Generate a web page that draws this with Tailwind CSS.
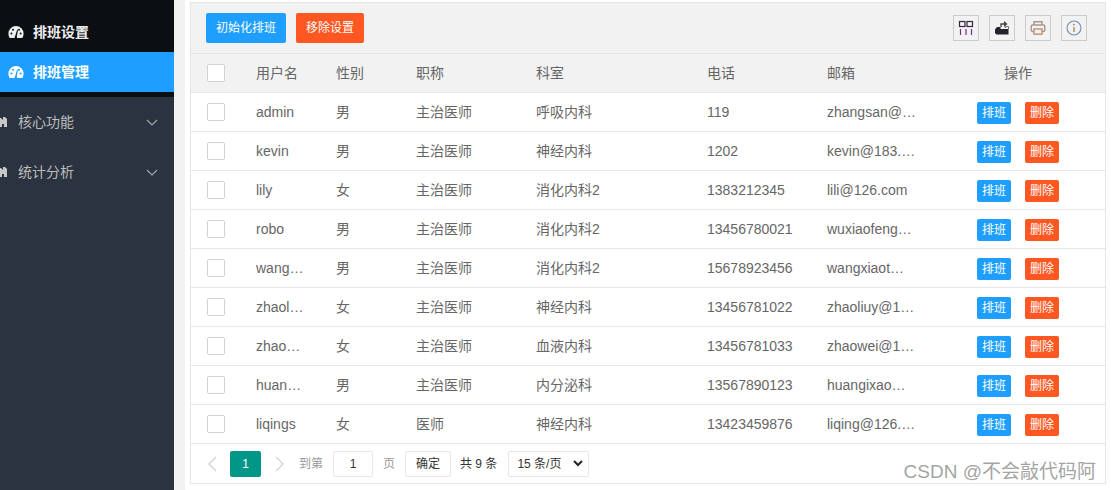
<!DOCTYPE html>
<html lang="zh">
<head>
  <meta charset="UTF-8">
  <title>排班管理</title>
  <script src="https://cdn.jsdelivr.net/npm/@tailwindcss/browser@4"></script>
</head>
<body class="bg-white font-['Liberation_Sans','Noto_Sans_CJK_SC',sans-serif] text-[14px] text-[#666] overflow-hidden">
<div class="flex h-[490px] w-[1111px] overflow-hidden">

  <!-- sidebar -->
  <aside class="w-[174px] shrink-0 bg-[#2a333f] text-[14px]">
    <div class="h-[52px] bg-[#0b0e13] pt-3 flex items-center pl-2 text-[#eee] font-bold">
      <svg class="w-[16px] h-[14px] mr-[9px]" viewBox="0 0 16 14"><path fill="#eee" d="M8 1a7.6 7.6 0 0 0-7.6 7.6c0 1.6.4 3 1.2 4.4h12.8c.8-1.4 1.2-2.8 1.2-4.4A7.6 7.6 0 0 0 8 1z"/><g fill="#0b0e13"><circle cx="3.4" cy="8.6" r="1"/><circle cx="5" cy="4.8" r="1"/><circle cx="12.6" cy="8.6" r="1"/><circle cx="11" cy="4.8" r="1"/><path d="M7 11.4 9.2 4.6l.8.3L8.8 11.6A1.2 1.2 0 1 1 7 11.4z"/></g></svg>
      排班设置
    </div>
    <div class="h-[40px] bg-[#1e9fff] flex items-center pl-2 text-white font-bold">
      <svg class="w-[16px] h-[14px] mr-[9px]" viewBox="0 0 16 14"><path fill="#fff" d="M8 1a7.6 7.6 0 0 0-7.6 7.6c0 1.6.4 3 1.2 4.4h12.8c.8-1.4 1.2-2.8 1.2-4.4A7.6 7.6 0 0 0 8 1z"/><g fill="#1e9fff"><circle cx="3.4" cy="8.6" r="1"/><circle cx="5" cy="4.8" r="1"/><circle cx="12.6" cy="8.6" r="1"/><circle cx="11" cy="4.8" r="1"/><path d="M7 11.4 9.2 4.6l.8.3L8.8 11.6A1.2 1.2 0 1 1 7 11.4z"/></g></svg>
      排班管理
    </div>
    <div class="h-[5px] bg-[#0b0e13]"></div>
    <div class="h-[50px] flex items-center justify-between pr-[16px] text-[#bdbdbd]">
      <span class="flex items-center">
        <svg class="w-[7px] h-[12px] mr-[11px]" viewBox="0 0 7 12"><path fill="#c8c8c8" d="M0 2h1l2 2V1h2l2 2v8H4V8H2v3H0z"/></svg>
        核心功能
      </span>
      <svg class="w-[12px] h-[7px]" viewBox="0 0 12 7"><path fill="none" stroke="#a8a8a8" stroke-width="1.1" d="M1 1l5 5 5-5"/></svg>
    </div>
    <div class="h-[50px] flex items-center justify-between pr-[16px] text-[#bdbdbd]">
      <span class="flex items-center">
        <svg class="w-[7px] h-[12px] mr-[11px]" viewBox="0 0 7 12"><path fill="#c8c8c8" d="M0 2h1l2 2V1h2l2 2v8H4V8H2v3H0z"/></svg>
        统计分析
      </span>
      <svg class="w-[12px] h-[7px]" viewBox="0 0 12 7"><path fill="none" stroke="#a8a8a8" stroke-width="1.1" d="M1 1l5 5 5-5"/></svg>
    </div>
  </aside>

  <div class="w-[11px] shrink-0 bg-[#f2f2f2]"></div>

  <!-- main -->
  <main class="ml-[5px] mt-[2px] w-[916px] h-[482px] border border-[#e6e6e6] bg-white relative">
    <!-- toolbar -->
    <div class="h-[51px] bg-[#f2f2f2] border-b border-[#e6e6e6] flex items-center justify-between pl-[15px] pr-[18px]">
      <div class="flex gap-[10px] text-[12px] text-white">
        <button class="h-[30px] w-[80px] bg-[#1e9fff] rounded-[2px]">初始化排班</button>
        <button class="h-[30px] w-[68px] bg-[#ff5722] rounded-[2px]">移除设置</button>
      </div>
      <div class="flex gap-[10px]">
        <div class="w-[26px] h-[26px] border border-[#ccc] flex items-center justify-center">
          <svg class="w-[16px] h-[16px]" viewBox="0 0 16 16" fill="none" stroke="#33263d" stroke-width="1.2"><rect x="1.5" y="1.5" width="5.5" height="5"/><rect x="9" y="1.5" width="5.5" height="5"/><path d="M2.5 9v6M8 9v6M13.5 9v6" stroke="#7a2a8a"/></svg>
        </div>
        <div class="w-[26px] h-[26px] border border-[#ccc] flex items-center justify-center">
          <svg class="w-[16px] h-[16px]" viewBox="0 0 16 16"><path fill="#23232b" d="M1 9.5 3 7h3.5v2h8v5.5H2.5L1 13z"/><path fill="none" stroke="#444" stroke-width="1.3" d="M7 7V4h3.5"/><path fill="#444" d="M10 1l3.5 3L10 7z"/><path fill="none" stroke="#6a6a80" stroke-width="1" d="M11.5 8V6.5h3V9"/></svg>
        </div>
        <div class="w-[26px] h-[26px] border border-[#ccc] flex items-center justify-center">
          <svg class="w-[16px] h-[16px]" viewBox="0 0 16 16" fill="none" stroke="#a8968a" stroke-width="1.4"><path d="M4 5V1.8h8V5"/><rect x="1.2" y="5" width="13.6" height="6.5" rx="1.5"/><rect x="4" y="9" width="8" height="5.2" fill="#f2f2f2" stroke="#c09070"/></svg>
        </div>
        <div class="w-[26px] h-[26px] border border-[#ccc] flex items-center justify-center">
          <svg class="w-[16px] h-[16px]" viewBox="0 0 16 16" fill="none"><circle cx="8" cy="8" r="7" stroke="#6f8bb0" stroke-width="1.1"/><path d="M8 7v5" stroke="#a08060" stroke-width="1.3"/><circle cx="8" cy="4.6" r=".9" fill="#a08060"/></svg>
        </div>
      </div>
    </div>

    <!-- header -->
    <div class="h-[39px] bg-[#f2f2f2] border-b border-[#e6e6e6] grid grid-cols-[55px_80px_80px_120px_171px_120px_120px_168px] items-center">
      <div class="pl-[16px]"><div class="w-[18px] h-[18px] border border-[#d2d2d2] bg-white rounded-[2px]"></div></div>
      <div class="px-[10px]">用户名</div>
      <div class="px-[10px]">性别</div>
      <div class="px-[10px]">职称</div>
      <div class="px-[10px]">科室</div>
      <div class="px-[10px]">电话</div>
      <div class="px-[10px]">邮箱</div>
      <div class="text-center pr-[6px]">操作</div>
    </div>

    <div id="rows"></div>

    <!-- pager -->
    <div class="h-[39px] flex items-center text-[12px] text-[#999] pl-[16px]">
      <svg class="w-[10px] h-[16px]" viewBox="0 0 10 16"><path fill="none" stroke="#d2d2d2" stroke-width="1.3" d="M9 1 2 8l7 7"/></svg>
      <span class="ml-[13px] w-[31px] h-[26px] bg-[#009688] rounded-[2px] text-white flex items-center justify-center">1</span>
      <svg class="ml-[14px] w-[10px] h-[16px]" viewBox="0 0 10 16"><path fill="none" stroke="#d2d2d2" stroke-width="1.3" d="M1 1l7 7-7 7"/></svg>
      <span class="ml-[14px]">到第</span>
      <span class="ml-[10px] w-[40px] h-[26px] border border-[#e6e6e6] rounded-[2px] text-[#333] flex items-center justify-center">1</span>
      <span class="ml-[10px]">页</span>
      <span class="ml-[10px] w-[46px] h-[26px] border border-[#e6e6e6] rounded-[2px] text-[#333] flex items-center justify-center">确定</span>
      <span class="ml-[9px] text-[#333]">共 9 条</span>
      <span class="ml-[11px] w-[81px] h-[26px] border border-[#e6e6e6] rounded-[2px] text-[#333] flex items-center justify-between pl-[8px] pr-[5px]">
        15 条/页
        <svg class="w-[10px] h-[7px]" viewBox="0 0 10 7"><path fill="none" stroke="#222" stroke-width="2" d="M1 1l4 4 4-4"/></svg>
      </span>
    </div>

    <div class="absolute right-[9px] bottom-[-1px] text-[19px] leading-[24px] text-[#8a8a8a]/80">CSDN @不会敲代码阿</div>
  </main>
</div>

<script>
  const rows = [
    ['admin', '男', '主治医师', '呼吸内科', '119', 'zhangsan@…'],
    ['kevin', '男', '主治医师', '神经内科', '1202', 'kevin@183.…'],
    ['lily', '女', '主治医师', '消化内科2', '1383212345', 'lili@126.com'],
    ['robo', '男', '主治医师', '消化内科2', '13456780021', 'wuxiaofeng…'],
    ['wang…', '男', '主治医师', '消化内科2', '15678923456', 'wangxiaot…'],
    ['zhaol…', '女', '主治医师', '神经内科', '13456781022', 'zhaoliuy@1…'],
    ['zhao…', '女', '主治医师', '血液内科', '13456781033', 'zhaowei@1…'],
    ['huan…', '男', '主治医师', '内分泌科', '13567890123', 'huangixao…'],
    ['liqings', '女', '医师', '神经内科', '13423459876', 'liqing@126.…']
  ];
  document.getElementById('rows').innerHTML = rows.map(r => `
    <div class="h-[39px] border-b border-[#e6e6e6] grid grid-cols-[55px_80px_80px_120px_171px_120px_120px_168px] items-center">
      <div class="pl-[16px]"><div class="w-[18px] h-[18px] border border-[#d2d2d2] bg-white rounded-[2px]"></div></div>
      ${r.map(c => `<div class="px-[10px] whitespace-nowrap">${c}</div>`).join('')}
      <div class="flex justify-center gap-[14px] pr-[6px] mt-[2px] text-[12px] text-white">
        <span class="w-[34px] h-[22px] bg-[#1e9fff] rounded-[2px] flex items-center justify-center">排班</span>
        <span class="w-[34px] h-[22px] bg-[#ff5722] rounded-[2px] flex items-center justify-center">删除</span>
      </div>
    </div>`).join('');
</script>
</body>
</html>
